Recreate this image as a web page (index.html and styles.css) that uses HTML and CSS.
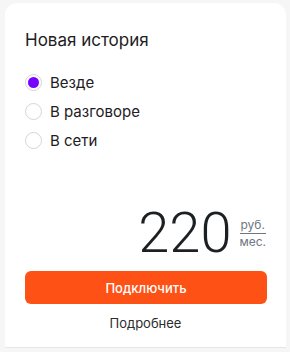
FILE: index.html
```html
<!DOCTYPE html>
<html lang="ru">
<head>
<meta charset="utf-8">
<link rel="stylesheet" href="styles.css">
</head>
<body>
<div class="card">
  <h2 class="title">Новая история</h2>
  <div class="options">
    <label class="opt"><span class="radio checked"></span><span>Везде</span></label>
    <label class="opt"><span class="radio"></span><span>В разговоре</span></label>
    <label class="opt"><span class="radio"></span><span>В сети</span></label>
  </div>
  <div class="price">
    <span class="amount">220</span>
    <span class="unit"><span class="rub">руб.</span><span class="mes">мес.</span></span>
  </div>
  <button class="btn">Подключить</button>
  <div class="more">Подробнее</div>
</div>
</body>
</html>
```
FILE: styles.css
```css
html, body { margin: 0; padding: 0; }
body {
  background: #f6f6f7;
  font-family: Inter, "Noto Sans", sans-serif;
  color: #1d2023;
  width: 290px;
  height: 352px;
  overflow: hidden;
}
.card {
  margin: 3px 0 0 5px;
  width: 281px;
  height: 345px;
  box-sizing: border-box;
  background: #fff;
  border-radius: 12px 12px 0 0;
  border-bottom: 1px solid #e6e6e8;
  padding: 26px 20px 0 20px;
}
.title {
  margin: 0;
  font-size: 17px;
  font-weight: 400;
  line-height: 22px;
}
.options {
  margin-top: 21px;
  display: flex;
  flex-direction: column;
  gap: 8px;
}
.opt {
  display: flex;
  align-items: center;
  gap: 8px;
  font-size: 15px;
  line-height: 21px;
  height: 21px;
}
.radio {
  width: 17px;
  height: 17px;
  box-sizing: border-box;
  border: 1.5px solid #d4d5d8;
  border-radius: 50%;
  display: inline-flex;
  align-items: center;
  justify-content: center;
}
.radio.checked::after {
  content: "";
  width: 11px;
  height: 11px;
  border-radius: 50%;
  background: #7700ff;
}
.price {
  margin-top: 54px;
  display: flex;
  justify-content: flex-end;
  align-items: center;
  gap: 8px;
}
.amount {
  font-family: Roboto, sans-serif;
  font-weight: 300;
  font-size: 56px;
  line-height: 56px;
}
.unit {
  display: flex;
  flex-direction: column;
  align-items: center;
  font-size: 12px;
  color: #6e7782;
  line-height: 14px;
}
.rub { border-bottom: 1px solid #6e7782; padding: 0 1px 1px; }
.mes { padding-top: 1px; }
.btn {
  display: block;
  margin-top: 10px;
  width: 242px;
  height: 33px;
  border: 0;
  border-radius: 6px;
  background: #fd5115;
  color: #fff;
  font-family: Inter, "Noto Sans", sans-serif;
  font-weight: 500;
  font-size: 13px;
}
.more {
  margin-top: 10px;
  text-align: center;
  font-size: 13px;
  line-height: 18px;
  color: #2c2d2e;
}
```
